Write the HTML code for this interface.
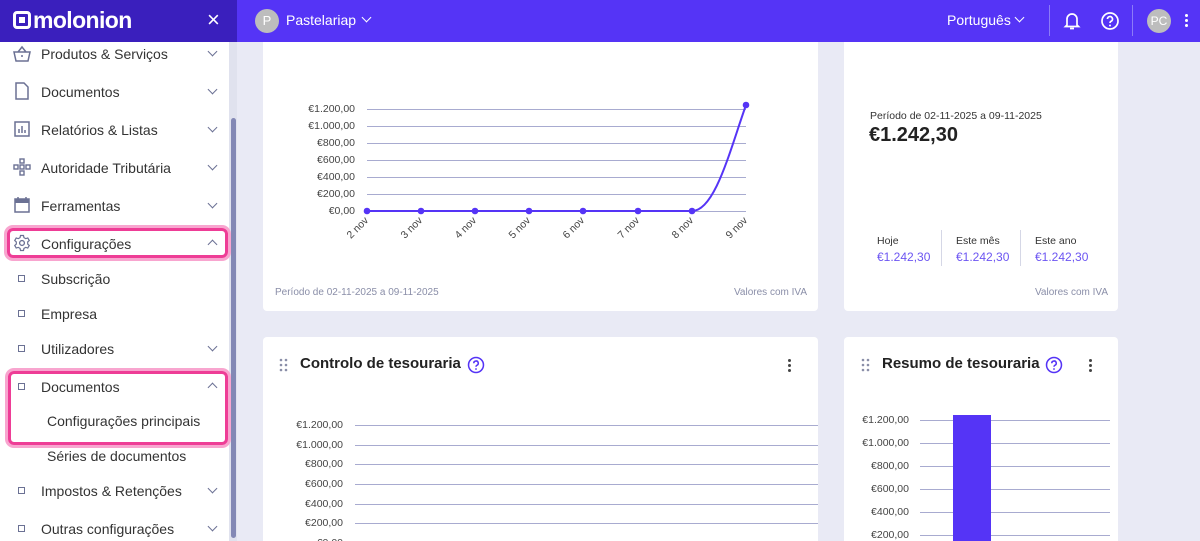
<!DOCTYPE html>
<html style="overflow:hidden;width:1200px;height:541px"><head><meta charset="utf-8"><style>
*{box-sizing:border-box;margin:0;padding:0}
body{width:1200px;height:541px;overflow:hidden;background:#e9eaf5;font-family:"Liberation Sans",sans-serif;position:relative;color:#2b2b33}
.abs{position:absolute}
.hdrL{left:0;top:0;width:237px;height:42px;background:#3a1fbd;z-index:5}
.hdrR{left:237px;top:0;width:963px;height:42px;background:#5534f6;z-index:5}
.z{z-index:6}
.side{left:0;top:42px;width:237px;height:499px;background:#fff}
.it{position:absolute;left:41px;font-size:14px;color:#333;line-height:16px}
.chev{position:absolute;left:209px;width:7px;height:7px;border-right:1.6px solid #6b7194;border-bottom:1.6px solid #6b7194;transform:rotate(45deg)}
.chev.up{transform:rotate(-135deg)}
.sq{position:absolute;left:18px;width:7px;height:7px;border:1.3px solid #6b7194}
.card{position:absolute;background:#fff;border-radius:4px}
.lbl{position:absolute;font-size:10.5px;color:#444;text-align:right;width:70px}
.hl{position:absolute;height:1px;background:#a8abd0}
.pink{position:absolute;border:3px solid #ee3d96;border-radius:6px;box-shadow:0 0 0 3px #f8a5cf}
</style></head><body>
<!-- card1 -->
<div class="card" style="left:263px;top:30px;width:555px;height:281px"></div>
<div class="lbl" style="left:285px;top:103px">€1.200,00</div>
<div class="lbl" style="left:285px;top:120px">€1.000,00</div>
<div class="lbl" style="left:285px;top:137px">€800,00</div>
<div class="lbl" style="left:285px;top:154px">€600,00</div>
<div class="lbl" style="left:285px;top:171px">€400,00</div>
<div class="lbl" style="left:285px;top:188px">€200,00</div>
<div class="lbl" style="left:285px;top:205px">€0,00</div>
<svg class="abs" style="left:263px;top:90px" width="555" height="160" viewBox="263 90 555 160" font-family="Liberation Sans" font-size="10.5" fill="#444">
<g stroke="#a8abd0" stroke-width="1"><path d="M367 109.5H746M367 126.5H746M367 143.5H746M367 160.5H746M367 177.5H746M367 194.5H746M367 211.5H746"/></g>
<path d="M367 211H692C715 211 730 150 746 105" fill="none" stroke="#5534f6" stroke-width="2"/>
<g fill="#5534f6"><circle cx="367" cy="211" r="3.3"/><circle cx="421" cy="211" r="3.3"/><circle cx="475" cy="211" r="3.3"/><circle cx="529" cy="211" r="3.3"/><circle cx="583" cy="211" r="3.3"/><circle cx="638" cy="211" r="3.3"/><circle cx="692" cy="211" r="3.3"/><circle cx="746" cy="105" r="3.3"/></g>
<g text-anchor="end"><text transform="translate(369,221) rotate(-45)">2 nov</text><text transform="translate(423,221) rotate(-45)">3 nov</text><text transform="translate(477,221) rotate(-45)">4 nov</text><text transform="translate(531,221) rotate(-45)">5 nov</text><text transform="translate(585,221) rotate(-45)">6 nov</text><text transform="translate(640,221) rotate(-45)">7 nov</text><text transform="translate(694,221) rotate(-45)">8 nov</text><text transform="translate(748,221) rotate(-45)">9 nov</text></g>
</svg>
<div class="abs" style="left:275px;top:287px;font-size:10px;color:#8a8ea8">Período de 02-11-2025 a 09-11-2025</div>
<div class="abs" style="left:734px;top:287px;font-size:10px;color:#8a8ea8">Valores com IVA</div>

<!-- card2 -->
<div class="card" style="left:844px;top:30px;width:274px;height:281px"></div>
<div class="abs" style="left:870px;top:110px;font-size:10.5px;color:#333">Período de 02-11-2025 a 09-11-2025</div>
<div class="abs" style="left:869px;top:124px;font-size:20px;font-weight:bold;color:#222">€1.242,30</div>
<div class="abs" style="left:941px;top:230px;width:1px;height:36px;background:#d5d7e6"></div>
<div class="abs" style="left:1020px;top:230px;width:1px;height:36px;background:#d5d7e6"></div>
<div class="abs" style="left:877px;top:235px;font-size:10.5px;color:#333">Hoje</div>
<div class="abs" style="left:956px;top:235px;font-size:10.5px;color:#333">Este mês</div>
<div class="abs" style="left:1035px;top:235px;font-size:10.5px;color:#333">Este ano</div>
<div class="abs" style="left:877px;top:250px;font-size:12px;color:#6c55f2">€1.242,30</div>
<div class="abs" style="left:956px;top:250px;font-size:12px;color:#6c55f2">€1.242,30</div>
<div class="abs" style="left:1035px;top:250px;font-size:12px;color:#6c55f2">€1.242,30</div>
<div class="abs" style="left:1035px;top:287px;font-size:10px;color:#8a8ea8">Valores com IVA</div>

<!-- card3 -->
<div class="card" style="left:263px;top:337px;width:555px;height:204px;border-radius:4px 4px 0 0"></div>
<svg class="abs" style="left:279px;top:358px" width="10" height="14"><g fill="#8a8ea8"><circle cx="2" cy="2" r="1.3"/><circle cx="7" cy="2" r="1.3"/><circle cx="2" cy="7" r="1.3"/><circle cx="7" cy="7" r="1.3"/><circle cx="2" cy="12" r="1.3"/><circle cx="7" cy="12" r="1.3"/></g></svg>
<div class="abs" style="left:300px;top:355px;font-size:15px;font-weight:bold;color:#222">Controlo de tesouraria</div>
<svg class="abs" style="left:467px;top:356px" width="18" height="18" viewBox="0 0 20 20"><circle cx="10" cy="10" r="8.3" fill="none" stroke="#5534f6" stroke-width="1.7"/><path d="M7.5 8a2.5 2.5 0 1 1 3.5 2.3c-.7.4-1 .9-1 1.7" fill="none" stroke="#5534f6" stroke-width="1.7"/><circle cx="10" cy="14.5" r="1" fill="#5534f6"/></svg>
<div class="abs" style="left:788px;top:359px;width:3px;height:3px;background:#444;border-radius:50%;box-shadow:0 5px 0 #444,0 10px 0 #444"></div>
<div class="lbl" style="left:273px;top:419px">€1.200,00</div>
<div class="lbl" style="left:273px;top:439px">€1.000,00</div>
<div class="lbl" style="left:273px;top:458px">€800,00</div>
<div class="lbl" style="left:273px;top:478px">€600,00</div>
<div class="lbl" style="left:273px;top:498px">€400,00</div>
<div class="lbl" style="left:273px;top:517px">€200,00</div>
<div class="lbl" style="left:273px;top:537px">€0,00</div>
<div class="hl" style="left:355px;top:425px;width:463px"></div>
<div class="hl" style="left:355px;top:445px;width:463px"></div>
<div class="hl" style="left:355px;top:464px;width:463px"></div>
<div class="hl" style="left:355px;top:484px;width:463px"></div>
<div class="hl" style="left:355px;top:504px;width:463px"></div>
<div class="hl" style="left:355px;top:523px;width:463px"></div>

<!-- card4 -->
<div class="card" style="left:844px;top:337px;width:274px;height:204px;border-radius:4px 4px 0 0"></div>
<svg class="abs" style="left:861px;top:358px" width="10" height="14"><g fill="#8a8ea8"><circle cx="2" cy="2" r="1.3"/><circle cx="7" cy="2" r="1.3"/><circle cx="2" cy="7" r="1.3"/><circle cx="7" cy="7" r="1.3"/><circle cx="2" cy="12" r="1.3"/><circle cx="7" cy="12" r="1.3"/></g></svg>
<div class="abs" style="left:882px;top:355px;font-size:15px;font-weight:bold;color:#222">Resumo de tesouraria</div>
<svg class="abs" style="left:1045px;top:356px" width="18" height="18" viewBox="0 0 20 20"><circle cx="10" cy="10" r="8.3" fill="none" stroke="#5534f6" stroke-width="1.7"/><path d="M7.5 8a2.5 2.5 0 1 1 3.5 2.3c-.7.4-1 .9-1 1.7" fill="none" stroke="#5534f6" stroke-width="1.7"/><circle cx="10" cy="14.5" r="1" fill="#5534f6"/></svg>
<div class="abs" style="left:1089px;top:359px;width:3px;height:3px;background:#444;border-radius:50%;box-shadow:0 5px 0 #444,0 10px 0 #444"></div>
<div class="lbl" style="left:839px;top:414px">€1.200,00</div>
<div class="lbl" style="left:839px;top:437px">€1.000,00</div>
<div class="lbl" style="left:839px;top:460px">€800,00</div>
<div class="lbl" style="left:839px;top:483px">€600,00</div>
<div class="lbl" style="left:839px;top:506px">€400,00</div>
<div class="lbl" style="left:839px;top:529px">€200,00</div>
<div class="hl" style="left:920px;top:420px;width:190px"></div>
<div class="hl" style="left:920px;top:443px;width:190px"></div>
<div class="hl" style="left:920px;top:466px;width:190px"></div>
<div class="hl" style="left:920px;top:489px;width:190px"></div>
<div class="hl" style="left:920px;top:512px;width:190px"></div>
<div class="hl" style="left:920px;top:535px;width:190px"></div>
<div class="abs" style="left:953px;top:415px;width:38px;height:126px;background:#5534f6"></div>

<!-- header -->
<div class="abs hdrL"></div>
<div class="abs hdrR"></div>
<div class="abs z" style="left:13px;top:11px;width:18px;height:18px;border:3px solid #fff;border-radius:4px"></div>
<div class="abs z" style="left:19px;top:17px;width:6px;height:6px;background:#fff"></div>
<div class="abs z" style="left:33px;top:5px;font-size:23px;color:#fff;font-weight:bold;letter-spacing:-0.6px;line-height:30px">molonion</div>
<div class="abs z" style="left:207px;top:7px;font-size:22px;color:#fff;line-height:26px">×</div>
<div class="abs z" style="left:255px;top:9px;width:24px;height:24px;border-radius:50%;background:#bdbdbd;color:#fff;font-size:13px;text-align:center;line-height:24px">P</div>
<div class="abs z" style="left:286px;top:12px;color:#fff;font-size:14px">Pastelariap</div>
<div class="abs z" style="left:363px;top:14px;width:7px;height:7px;border-right:1.8px solid #fff;border-bottom:1.8px solid #fff;transform:rotate(45deg)"></div>
<div class="abs z" style="left:947px;top:12px;color:#fff;font-size:14px">Português</div>
<div class="abs z" style="left:1016px;top:14px;width:7px;height:7px;border-right:1.8px solid #fff;border-bottom:1.8px solid #fff;transform:rotate(45deg)"></div>
<div class="abs z" style="left:1049px;top:5px;width:1px;height:31px;background:#8c7bf8"></div>
<div class="abs z" style="left:1132px;top:5px;width:1px;height:31px;background:#8c7bf8"></div>
<svg class="abs z" style="left:1063px;top:11px" width="18" height="20" viewBox="0 0 18 20"><path d="M4 14V8a5 5 0 0 1 10 0v6l1.5 1.5h-13Z M7 17.5h4" fill="none" stroke="#fff" stroke-width="1.7"/></svg>
<svg class="abs z" style="left:1100px;top:11px" width="20" height="20" viewBox="0 0 20 20"><circle cx="10" cy="10" r="8" fill="none" stroke="#fff" stroke-width="1.7"/><path d="M7.5 8a2.5 2.5 0 1 1 3.5 2.3c-.7.4-1 .9-1 1.7" fill="none" stroke="#fff" stroke-width="1.7"/><circle cx="10" cy="14.5" r="1" fill="#fff"/></svg>
<div class="abs z" style="left:1147px;top:9px;width:24px;height:24px;border-radius:50%;background:#bdbdbd;color:#fff;font-size:12px;text-align:center;line-height:24px">PC</div>
<div class="abs z" style="left:1185px;top:14px;width:3px;height:3px;background:#fff;border-radius:50%;box-shadow:0 5px 0 #fff,0 10px 0 #fff"></div>

<!-- sidebar -->
<div class="abs side"></div>
<div class="abs" style="left:229px;top:42px;width:8px;height:499px;background:#e0e2ee"></div>
<div class="abs" style="left:231px;top:118px;width:5px;height:420px;background:#8388b5;border-radius:3px"></div>

<svg class="abs" style="left:12px;top:45px" width="20" height="18" viewBox="0 0 20 18"><path d="M2 7h16l-2 9H4Z M6 7l4-5 4 5" fill="none" stroke="#6b7194" stroke-width="1.5"/><circle cx="10" cy="11" r="1" fill="#6b7194"/></svg>
<div class="it" style="top:46px">Produtos &amp; Serviços</div><div class="chev" style="top:48px"></div>
<svg class="abs" style="left:15px;top:82px" width="14" height="18" viewBox="0 0 14 18"><path d="M1 1h8l4 4v12H1Z" fill="none" stroke="#6b7194" stroke-width="1.5"/></svg>
<div class="it" style="top:84px">Documentos</div><div class="chev" style="top:86px"></div>
<svg class="abs" style="left:14px;top:121px" width="16" height="16" viewBox="0 0 16 16"><rect x="1" y="1" width="14" height="14" fill="none" stroke="#6b7194" stroke-width="1.5"/><path d="M5 12V8M8 12V5M11 12V9" stroke="#6b7194" stroke-width="1.5"/></svg>
<div class="it" style="top:122px">Relatórios &amp; Listas</div><div class="chev" style="top:124px"></div>
<svg class="abs" style="left:13px;top:158px" width="18" height="18" viewBox="0 0 18 18"><g fill="none" stroke="#6b7194" stroke-width="1.4"><rect x="7" y="1" width="4" height="4"/><rect x="1" y="7" width="4" height="4"/><rect x="7" y="7" width="4" height="4"/><rect x="13" y="7" width="4" height="4"/><rect x="7" y="13" width="4" height="4"/></g></svg>
<div class="it" style="top:160px">Autoridade Tributária</div><div class="chev" style="top:162px"></div>
<svg class="abs" style="left:14px;top:196px" width="16" height="17" viewBox="0 0 16 17"><rect x="1" y="3" width="14" height="13" fill="none" stroke="#6b7194" stroke-width="1.5"/><rect x="1" y="3" width="14" height="4" fill="#6b7194"/><path d="M4 1v3M12 1v3" stroke="#6b7194" stroke-width="1.5"/></svg>
<div class="it" style="top:198px">Ferramentas</div><div class="chev" style="top:200px"></div>
<div class="pink" style="left:7px;top:228px;width:221px;height:30px"></div>
<svg class="abs" style="left:13px;top:234px" width="18" height="18" viewBox="0 0 24 24"><circle cx="12" cy="12" r="3.2" fill="none" stroke="#6b7194" stroke-width="1.8"/><path d="M10 2h4l.6 2.8 2.4 1.4 2.7-.9 2 3.4-2.1 1.9v2.8l2.1 1.9-2 3.4-2.7-.9-2.4 1.4L14 22h-4l-.6-2.8-2.4-1.4-2.7.9-2-3.4 2.1-1.9v-2.8L2.3 8.7l2-3.4 2.7.9 2.4-1.4Z" fill="none" stroke="#6b7194" stroke-width="1.6"/></svg>
<div class="it" style="top:236px">Configurações</div><div class="chev up" style="top:241px"></div>
<div class="sq" style="top:275px"></div><div class="it" style="top:271px">Subscrição</div>
<div class="sq" style="top:310px"></div><div class="it" style="top:306px">Empresa</div>
<div class="sq" style="top:345px"></div><div class="it" style="top:341px">Utilizadores</div><div class="chev" style="top:343px"></div>
<div class="pink" style="left:8px;top:371px;width:220px;height:74px"></div>
<div class="sq" style="top:383px"></div><div class="it" style="top:379px">Documentos</div><div class="chev up" style="top:384px"></div>
<div class="it" style="top:413px;left:47px">Configurações principais</div>
<div class="it" style="top:448px;left:47px">Séries de documentos</div>
<div class="sq" style="top:487px"></div><div class="it" style="top:483px">Impostos &amp; Retenções</div><div class="chev" style="top:485px"></div>
<div class="sq" style="top:525px"></div><div class="it" style="top:521px">Outras configurações</div><div class="chev" style="top:523px"></div>
</body></html>
